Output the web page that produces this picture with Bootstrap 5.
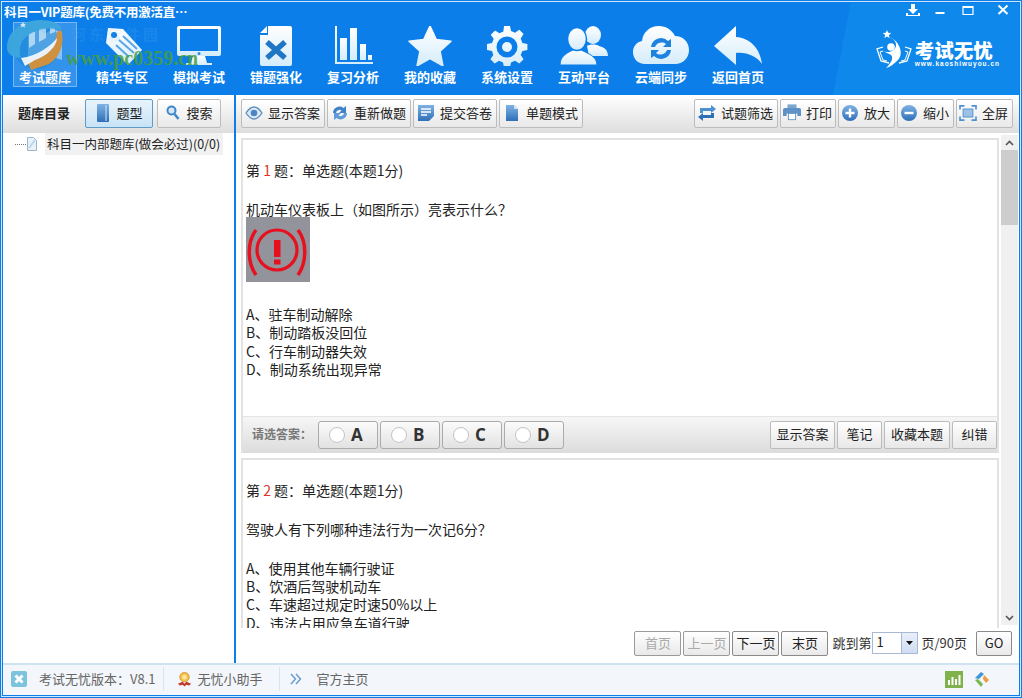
<!DOCTYPE html>
<html lang="zh-CN">
<head>
    <meta charset="UTF-8">
    <meta name="viewport" content="width=device-width, initial-scale=1.0">
    <title>考试无忧</title>
    <link href="https://cdn.jsdelivr.net/npm/bootstrap@5.3.0/dist/css/bootstrap.min.css" rel="stylesheet">
    <style>
        html, body { height: 100%; overflow: hidden; }
        body {
            font-family: "Noto Sans CJK SC", "Liberation Sans", sans-serif;
            font-size: 13px;
            color: #222;
            background: #fff;
        }
        .frame-outer { height: 698px; border: 1px solid #0b7ee9; }
        .frame-mid { height: 100%; border: 1px solid #cfe6fb; }
        .frame-inner { height: 100%; border: 1px solid #0b7ee9; position: relative; }

        /* header */
        .app-header {
            height: 92px;
            background: linear-gradient(101deg, #0b7ee9 82%, #0e88ea 82%);
            color: #fff;
        }
        .title-row { height: 19px; padding-left: 1px; }
        .app-title { font-weight: 700; font-size: 12.5px; letter-spacing: -.25px; line-height: 18px; white-space: nowrap; }
        .win-btns { padding-right: 9px; padding-top: 1px; }
        .win-min { margin-left: 12px; }
        .win-max { margin-left: 14px; }
        .win-close { margin-left: 21px; }
        .tool-strip { gap: 13px; padding-left: 10px; }
        .tool-item {
            width: 64px;
            height: 65px;
            border: 1px solid transparent;
            text-align: center;
            font-weight: 700;
            font-size: 13px;
            line-height: 18px;
            padding-top: 3px;
        }
        .tool-item svg { display: block; margin: 0 auto 2px; }
        .tool-item.is-active { background: rgba(255,255,255,.16); border-color: rgba(255,255,255,.35); }
        .brand-box { margin-left: auto; margin-right: 19px; margin-top: 8px; gap: 3px; }
        .brand-text { padding-top: 10px; }
        .brand-name { font-size: 19.5px; line-height: 20px; font-weight: 900; white-space: nowrap; }
        .brand-url { font-family: "Liberation Sans", sans-serif; font-size: 6.5px; line-height: 8px; font-weight: 700; letter-spacing: 1px; white-space: nowrap; }
        .site-emblem { position: absolute; left: 4px; top: 15px; }
        .site-mark {
            position: absolute;
            left: 63px;
            top: 45px;
            font-family: "Liberation Serif", serif;
            font-weight: 700;
            font-size: 20px;
            line-height: 20px;
            color: rgba(72,158,62,.85);
            white-space: nowrap;
        }
        .site-mark-faint {
            position: absolute;
            left: 68px;
            top: 22px;
            font-weight: 700;
            font-size: 15px;
            line-height: 18px;
            letter-spacing: 3px;
            color: rgba(120,190,245,.14);
            white-space: nowrap;
        }

        /* panels */
        .main-split { height: 568px; }
        .left-pane { width: 231px; flex: none; }
        .split-line { width: 2px; flex: none; background: #0b7ee9; }
        .right-pane { flex: 1 1 0; min-width: 0; }
        .bar-row {
            height: 38px;
            background: linear-gradient(#ffffff, #dedede);
            padding-top: 4px;
        }
        .tool-wrap { padding-left: 5px; padding-right: 6px; }
        .gap-btns { gap: 2px; }
        .left-title { font-weight: 700; margin: 0 15px; line-height: 28px; font-size: 13px; }
        .tool-btn {
            height: 29px;
            padding: 0 4px 2px 3px;
            font-size: 13px;
            line-height: 1;
            color: #222;
            background: linear-gradient(#ffffff, #e9e9e9);
            border: 1px solid #bcbcbc;
            border-radius: 2px;
            gap: 5px;
            white-space: nowrap;
        }
        .tool-btn.btn-tight { padding: 0 4px 2px 2px; }
        .tool-btn.btn-print { padding: 0 3px 2px 2px; }
        .tool-btn.side-btn { width: 64px; padding: 0 0 2px; justify-content: center; gap: 7px; }
        .tool-btn.side-btn.wide-btn { width: 68px; }
        .tool-btn.is-on { background: linear-gradient(#e9f4fc, #c7e3f6); border-color: #5d9cc8; }
        .tree-row { height: 22px; padding-left: 12px; }
        .tree-dots { width: 11px; border-top: 1px dotted #777; }
        .tree-text { background: #f1f1f1; width: 178px; height: 22px; line-height: 22px; padding-left: 2px; margin-left: 7px; font-size: 12.5px; white-space: nowrap; }

        .work-area { height: 495px; }
        .qa-column { flex: 1 1 0; min-width: 0; padding: 5px 2px 0 5px; overflow: hidden; }
        .qa-card { height: 315px; border: 2px solid #e2e2e2; border-bottom: 0; margin-bottom: 5px; }
        .qa-body { padding: 21px 0 0 3px; font-size: 14px; line-height: 18.3px; color: #222; }
        .qa-head { margin-bottom: 20.6px; }
        .qa-ask { margin-bottom: 20.6px; }
        .qa-pic { display: block; margin: -1px 0 23px; }
        .qa-no { color: #e2322b; }
        .qa-bar {
            height: 37px;
            margin-top: auto;
            background: linear-gradient(#f6f6f6, #dcdcdc);
            border-top: 1px solid #e4e4e4;
            padding: 4px 0 0 9px;
        }
        .pick-label { font-weight: 700; font-size: 12px; color: #777; width: 66px; line-height: 25px; }
        .pick-btn {
            width: 60px;
            height: 28px;
            padding: 0 0 0 10px;
            gap: 6px;
            margin-right: 2px;
            font-family: "Open Sans", "Liberation Sans", sans-serif;
            font-weight: 700;
            font-size: 17px;
            color: #333;
            background: linear-gradient(#fbfbfb, #e2e2e2);
            border: 1px solid #ababab;
            border-radius: 3px;
        }
        .pick-dot { width: 16px; height: 16px; border-radius: 50%; background: #fff; border: 1px solid #c4c4c4; flex: none; }
        .mini-btn {
            width: 65px;
            height: 28px;
            padding: 0 0 3px;
            margin-left: 2px;
            font-size: 13px;
            line-height: 1;
            color: #222;
            background: linear-gradient(#ffffff, #e8e8e8);
            border: 1px solid #bcbcbc;
            border-radius: 2px;
        }
        .mini-btn.mini-short { width: 45px; }
        .mini-btn.mini-wide { width: 66px; }

        .scroll-rail { width: 17px; flex: none; margin: 2px 1px 3px 0; background: #f0f0f0; }
        .scroll-cap { height: 15px; }
        .scroll-thumb { height: 75px; background: #cdcdcd; }

        .pager-row { height: 35px; padding: 3px 7px 0 0; }
        .page-btn {
            width: 47px;
            height: 25px;
            padding: 0 0 3px;
            margin-right: 2px;
            font-size: 13px;
            line-height: 1;
            color: #222;
            background: linear-gradient(#ffffff, #e9e9e9);
            border: 1px solid #8a8a8a;
            border-radius: 2px;
        }
        .page-btn:disabled { color: #aaa; opacity: 1; border-color: #9a9a9a; background: linear-gradient(#ffffff, #e9e9e9); }
        .page-btn.go-btn { width: 36px; margin: 0 0 0 9px; }
        .jump-text { line-height: 23px; white-space: nowrap; color: #333; margin-left: 2px; }
        .jump-box { width: 46px; height: 22px; border: 1px solid #a9b8d3; padding-left: 3px; line-height: 18px; margin: 1px 1px 0 1px; background: #fff; }
        .jump-caret { width: 16px; height: 20px; background: linear-gradient(#e9f0fb, #cfdcf2); border-left: 1px solid #a9b8d3; }

        .status-bar { height: 32px; background: #f3f6fa; border-top: 2px solid #cfe2f0; color: #666; font-size: 13px; padding: 0 29px 2px 8px; white-space: nowrap; }
        .status-sep { width: 1px; height: 24px; background: #d8e4ee; }
        .status-ver { margin-left: 12px; }
        .status-sep-a { margin-left: 7px; }
        .status-medal { margin-left: 13px; }
        .status-help { margin-left: 6px; }
        .status-sep-b { margin-left: 16px; }
        .status-chev { margin-left: 10px; }
        .status-home { margin-left: 15px; }
        .status-logo { margin-left: 10px; }
    </style>
</head>
<body>
<svg width="0" height="0" class="position-absolute">
    <defs>
        <linearGradient id="iconFill" x1="0" y1="0" x2="0" y2="1">
            <stop offset="0" stop-color="#ffffff"/>
            <stop offset="1" stop-color="#d5ecfa"/>
        </linearGradient>
        <linearGradient id="btnBlue" x1="0" y1="0" x2="0" y2="1">
            <stop offset="0" stop-color="#7fb2e4"/>
            <stop offset="1" stop-color="#2f6fb8"/>
        </linearGradient>
    </defs>
</svg>
<div class="frame-outer">
<div class="frame-mid">
<div class="frame-inner d-flex flex-column">

    <header class="app-header">
        <div class="title-row d-flex justify-content-between">
            <div class="app-title">科目一VIP题库(免费不用激活直…</div>
            <div class="win-btns d-flex align-items-start">
                <svg width="16" height="15" viewBox="0 0 16 15"><path d="M6 0h4v5h3l-5 5-5-5h3z M1 9h2v2h10V9h2v3H1z" fill="#fff"/></svg>
                <svg class="win-min" width="14" height="15" viewBox="0 0 14 15"><rect x="2.500" y="8" width="9" height="2" fill="#fff"/></svg>
                <svg class="win-max" width="14" height="15" viewBox="0 0 14 15"><path d="M2 2.500h10v8H2z" fill="none" stroke="#fff" stroke-width="1.200"/><rect x="2" y="2" width="10" height="2" fill="#fff"/></svg>
                <svg class="win-close" width="14" height="15" viewBox="0 0 14 15"><path d="M2.500 1.500l9 8.500M11.500 1.500l-9 8.500" stroke="#fff" stroke-width="2"/></svg>
            </div>
        </div>
        <div class="tool-strip d-flex">
            <div class="tool-item is-active">
                <svg width="46" height="40" viewBox="0 0 46 40"><path d="M6 6c7-3 13-2 17 2 4-4 10-5 17-2v28c-7-3-13-2-17 2-4-4-10-5-17-2z" fill="url(#iconFill)" opacity=".5"/></svg>
                考试题库
            </div>
            <div class="tool-item">
                <svg width="46" height="40" viewBox="0 0 46 40"><path d="M9 2l15 1 19 21-14 15L7 17z" fill="url(#iconFill)"/><circle cx="15" cy="9" r="3" fill="#0b7ee9"/><path d="M20 14l15 13M17 19l13 12M24 10l14 13" stroke="#5aa5e6" stroke-width="2"/></svg>
                精华专区
            </div>
            <div class="tool-item">
                <svg width="46" height="40" viewBox="0 0 46 40"><path d="M3 0h40a2 2 0 0 1 2 2v26a2 2 0 0 1-2 2H3a2 2 0 0 1-2-2V2a2 2 0 0 1 2-2z" fill="url(#iconFill)"/><rect x="4" y="3" width="38" height="22" fill="#0b7ee9"/><circle cx="23" cy="27.500" r="1.500" fill="#2f8be0"/><path d="M17 30h12l2 7h5v2H10v-2h5z" fill="url(#iconFill)"/></svg>
                模拟考试
            </div>
            <div class="tool-item">
                <svg width="46" height="40" viewBox="0 0 46 40"><path d="M15 0h22a2 2 0 0 1 2 2v36a2 2 0 0 1-2 2H9a2 2 0 0 1-2-2V9h8z M7 7l7-7v7z" fill="url(#iconFill)"/><path d="M14 16l18 16M32 16L14 32" stroke="#1f76c4" stroke-width="5.500"/></svg>
                错题强化
            </div>
            <div class="tool-item">
                <svg width="46" height="40" viewBox="0 0 46 40"><path d="M5 0h2v36H5zM5 36h38v2H5z" fill="url(#iconFill)"/><rect x="10" y="12" width="7" height="22" fill="url(#iconFill)"/><rect x="20" y="2" width="7" height="32" fill="url(#iconFill)"/><rect x="30" y="18" width="6" height="16" fill="url(#iconFill)"/><rect x="38" y="29" width="4" height="5" fill="url(#iconFill)"/></svg>
                复习分析
            </div>
            <div class="tool-item">
                <svg width="46" height="40" viewBox="0 0 46 40"><path d="M23 0l6.300 13.500 14.700 1.800-10.900 10 2.900 14.600L23 32.700l-13 7.200 2.900-14.600-10.900-10 14.700-1.800z" fill="url(#iconFill)" stroke="url(#iconFill)" stroke-linejoin="round" stroke-width="1.500"/></svg>
                我的收藏
            </div>
            <div class="tool-item">
                <svg width="46" height="40" viewBox="0 0 46 40"><path fill="url(#iconFill)" fill-rule="evenodd" d="M20 0h6l1 5 4 1.700 4.300-2.900 4.300 4.300-2.900 4.300L38.400 17l5 1v6l-5 1-1.700 4 2.900 4.300-4.300 4.300-4.300-2.900-4 1.700-1 5h-6l-1-5-4-1.700-4.300 2.900-4.300-4.300 2.900-4.300L8 25l-5-1v-6l5-1 1.700-4-2.900-4.300 4.300-4.300 4.300 2.900 4-1.700zM23 10.500a10.500 10.500 0 1 0 0 21 10.500 10.500 0 0 0 0-21zM23 16a5 5 0 1 1 0 10 5 5 0 0 1 0-10z"/></svg>
                系统设置
            </div>
            <div class="tool-item">
                <svg width="50" height="40" viewBox="0 0 50 40"><ellipse cx="34" cy="9" rx="8" ry="9" fill="url(#iconFill)"/><path d="M28 20c2-2 10-2 12 0 4 1 9 3 9 10H30z" fill="url(#iconFill)"/><ellipse cx="18" cy="13" rx="9.500" ry="11.500" fill="url(#iconFill)" stroke="#0b7ee9" stroke-width="1.500"/><path d="M1 39c0-9 7-12 13-15 2 1 6 1 8 0 6 3 16 6 16 15z" fill="url(#iconFill)" stroke="#0b7ee9" stroke-width="1"/></svg>
                互动平台
            </div>
            <div class="tool-item">
                <svg width="56" height="40" viewBox="0 0 56 40"><path d="M12 38C5 38 0 33 0 26c0-6 4-10 9-11C10 6 17 0 26 0c7 0 13 4 16 10 8 0 14 6 14 14s-6 14-14 14z" fill="url(#iconFill)"/><path d="M18 21a10 10 0 0 1 17-6l3-2v8h-8l3-3a7 7 0 0 0-11 3zM38 24a10 10 0 0 1-17 6l-3 2v-8h8l-3 3a7 7 0 0 0 11-3z" fill="#1e83df"/></svg>
                云端同步
            </div>
            <div class="tool-item">
                <svg width="48" height="40" viewBox="0 0 48 40"><path d="M22 0L0 20l22 19V27c11-1 20 3 26 11C46 22 36 12 22 11z" fill="url(#iconFill)"/></svg>
                返回首页
            </div>
            <div class="brand-box d-flex align-items-start">
                <svg width="36" height="40" viewBox="0 0 36 40">
                    <path d="M11 0l1.200 2.800 3 .3-2.300 2 .7 3-2.600-1.600L8.400 8l.7-3-2.300-2 3-.3z" fill="#fff"/>
                    <circle cx="15" cy="17" r="3.800" fill="#fff"/>
                    <path d="M14 7C24 12 28 24 22 30c-4 4-8 7-12 8 5-5 8-10 5-13-3-2-6-3-9-4 8 3 14-1 14-6 0-4-3-6-6-8z" fill="#fff"/>
                    <path d="M7 17L1 19l4 12 8 2M29 17l6 2-4 12-8 2" fill="none" stroke="#fff" stroke-width="1.300"/>
                    <path d="M7 21l-3 1 3 8 4 1M29 21l3 1-3 8-4 1" fill="none" stroke="#fff" stroke-width="1"/>
                </svg>
                <div class="brand-text">
                    <div class="brand-name">考试无忧</div>
                    <div class="brand-url">www.kaoshiwuyou.cn</div>
                </div>
            </div>
        </div>
    </header>

    <div class="main-split d-flex">
        <aside class="left-pane">
            <div class="bar-row d-flex">
                <div class="left-title">题库目录</div>
                <button class="btn tool-btn side-btn wide-btn is-on d-flex align-items-center" type="button">
                    <svg width="14" height="18" viewBox="0 0 14 18"><rect x="1" y="0" width="12" height="18" rx="1" fill="url(#btnBlue)"/><path d="M10 1v16" stroke="#cfe3f6"/></svg>
                    题型
                </button>
                <button class="btn tool-btn side-btn ms-1 d-flex align-items-center" type="button">
                    <svg width="14" height="16" viewBox="0 0 14 16"><circle cx="5.500" cy="5.500" r="4" fill="#d5e8f8" stroke="#3f86c9" stroke-width="2"/><path d="M8.500 9l4 5" stroke="#3f86c9" stroke-width="2.500"/></svg>
                    搜索
                </button>
            </div>
            <div class="tree-row d-flex align-items-center">
                <span class="tree-dots"></span>
                <svg width="12" height="14" viewBox="0 0 12 14"><path d="M1.500.5h6l3 3v10h-9z" fill="#e8f2fb" stroke="#9eb4c8"/><path d="M3 11L9 3" stroke="#bcd6ec" stroke-width="2"/></svg>
                <div class="tree-text">科目一内部题库(做会必过)(0/0)</div>
            </div>
        </aside>
        <div class="split-line"></div>
        <main class="right-pane d-flex flex-column">
            <div class="bar-row tool-wrap d-flex justify-content-between">
                <div class="d-flex gap-btns">
                    <button class="btn tool-btn d-flex align-items-center" type="button">
                        <svg width="18" height="14" viewBox="0 0 18 14"><path d="M1 7c3-4.500 5.500-6 8-6s5 1.500 8 6c-3 4.500-5.500 6-8 6s-5-1.500-8-6z" fill="#dfeaf5" stroke="#5a8fc0" stroke-width="1.300"/><circle cx="9" cy="7" r="3.300" fill="#4a87c4"/></svg>
                        显示答案
                    </button>
                    <button class="btn tool-btn d-flex align-items-center" type="button">
                        <svg width="18" height="18" viewBox="0 0 18 18"><path d="M2 9a6.500 6.500 0 0 1 10.500-5L15 2v7H8l2.500-2.500A3.500 3.500 0 0 0 5 9z" fill="#3f82c8"/><path d="M16 9a6.500 6.500 0 0 1-10.500 5L3 16V9h7l-2.500 2.500A3.500 3.500 0 0 0 13 9z" fill="#5f9bd6"/></svg>
                        重新做题
                    </button>
                    <button class="btn tool-btn d-flex align-items-center" type="button">
                        <svg width="18" height="18" viewBox="0 0 18 18"><path d="M1 1h16v11l-5 5H1z" fill="url(#btnBlue)"/><path d="M4 5h10M4 8h10M4 11h6" stroke="#fff" stroke-width="1.300"/></svg>
                        提交答卷
                    </button>
                    <button class="btn tool-btn d-flex align-items-center" type="button">
                        <svg width="18" height="18" viewBox="0 0 18 18"><path d="M3 1h8l4 4v12H3z" fill="url(#btnBlue)"/><path d="M11 1v4h4z" fill="#cfe3f6"/></svg>
                        单题模式
                    </button>
                </div>
                <div class="d-flex gap-btns">
                    <button class="btn tool-btn d-flex align-items-center" type="button">
                        <svg width="18" height="18" viewBox="0 0 18 18"><path d="M2 4h11V1l5 4-5 4V7H5v2H2z" fill="#4c90cf"/><path d="M16 14H5v3l-5-4 5-4v2h8V9h3z" fill="#2f6fb8"/></svg>
                        试题筛选
                    </button>
                    <button class="btn tool-btn btn-print d-flex align-items-center" type="button">
                        <svg width="18" height="17" viewBox="0 0 20 18"><rect x="5" y="0" width="10" height="4" fill="#7ba6d0"/><path d="M2 4h16a2 2 0 0 1 2 2v7h-4v-3H4v3H0V6a2 2 0 0 1 2-2z" fill="#5e92c6"/><rect x="6" y="10" width="8" height="7" fill="#fff" stroke="#5e92c6"/></svg>
                        打印
                    </button>
                    <button class="btn tool-btn btn-tight d-flex align-items-center" type="button">
                        <svg width="18" height="18" viewBox="0 0 18 18"><circle cx="9" cy="9" r="8" fill="url(#btnBlue)"/><path d="M4.500 9h9M9 4.500v9" stroke="#fff" stroke-width="2.400"/></svg>
                        放大
                    </button>
                    <button class="btn tool-btn btn-tight d-flex align-items-center" type="button">
                        <svg width="18" height="18" viewBox="0 0 18 18"><circle cx="9" cy="9" r="8" fill="url(#btnBlue)"/><path d="M4.500 9h9" stroke="#fff" stroke-width="2.400"/></svg>
                        缩小
                    </button>
                    <button class="btn tool-btn btn-tight d-flex align-items-center" type="button">
                        <svg width="18" height="16" viewBox="0 0 20 18"><path d="M1 5V1h5M14 1h5v4M19 13v4h-5M6 17H1v-4" fill="none" stroke="#4c90cf" stroke-width="1.800"/><rect x="4.500" y="4.500" width="11" height="9" fill="#9cc1e4" stroke="#4c90cf"/></svg>
                        全屏
                    </button>
                </div>
            </div>

            <div class="work-area d-flex">
                <div class="qa-column">
                    <section class="qa-card d-flex flex-column">
                        <div class="qa-body">
                            <div class="qa-head">第 <span class="qa-no">1</span> 题：单选题(本题1分)</div>
                            <div>机动车仪表板上（如图所示）亮表示什么？</div>
                            <svg class="qa-pic" width="64" height="65" viewBox="0 0 64 65">
                                <rect width="64" height="65" fill="#93939b"/>
                                <circle cx="31" cy="33" r="20" fill="none" stroke="#e6101f" stroke-width="3.200"/>
                                <path d="M10 13C1 25 1 45 10 58M52 13c9 12 9 32 0 45" fill="none" stroke="#e6101f" stroke-width="3.500"/>
                                <rect x="28" y="23" width="6.500" height="17" fill="#e6101f"/>
                                <rect x="28" y="42.500" width="6.500" height="5" fill="#e6101f"/>
                            </svg>
                            <div>A、驻车制动解除</div>
                            <div>B、制动踏板没回位</div>
                            <div>C、行车制动器失效</div>
                            <div>D、制动系统出现异常</div>
                        </div>
                        <div class="qa-bar d-flex">
                            <div class="pick-label">请选答案：</div>
                            <label class="btn pick-btn d-flex align-items-center"><span class="pick-dot"></span>A</label>
                            <label class="btn pick-btn d-flex align-items-center"><span class="pick-dot"></span>B</label>
                            <label class="btn pick-btn d-flex align-items-center"><span class="pick-dot"></span>C</label>
                            <label class="btn pick-btn d-flex align-items-center"><span class="pick-dot"></span>D</label>
                            <div class="ms-auto d-flex">
                                <button class="btn mini-btn" type="button">显示答案</button>
                                <button class="btn mini-btn mini-short" type="button">笔记</button>
                                <button class="btn mini-btn mini-wide" type="button">收藏本题</button>
                                <button class="btn mini-btn mini-short" type="button">纠错</button>
                            </div>
                        </div>
                    </section>
                    <section class="qa-card d-flex flex-column">
                        <div class="qa-body">
                            <div class="qa-head">第 <span class="qa-no">2</span> 题：单选题(本题1分)</div>
                            <div class="qa-ask">驾驶人有下列哪种违法行为一次记6分？</div>
                            <div>A、使用其他车辆行驶证</div>
                            <div>B、饮酒后驾驶机动车</div>
                            <div>C、车速超过规定时速50%以上</div>
                            <div>D、违法占用应急车道行驶</div>
                        </div>
                    </section>
                </div>
                <div class="scroll-rail d-flex flex-column">
                    <div class="scroll-cap d-flex justify-content-center align-items-center">
                        <svg width="9" height="6" viewBox="0 0 9 6"><path d="M1 5l3.500-3.500L8 5" fill="none" stroke="#555" stroke-width="1.600"/></svg>
                    </div>
                    <div class="scroll-thumb"></div>
                    <div class="scroll-cap mt-auto d-flex justify-content-center align-items-center">
                        <svg width="9" height="6" viewBox="0 0 9 6"><path d="M1 1l3.500 3.500L8 1" fill="none" stroke="#555" stroke-width="1.600"/></svg>
                    </div>
                </div>
            </div>

            <div class="pager-row d-flex justify-content-end">
                <button class="btn page-btn" type="button" disabled>首页</button>
                <button class="btn page-btn" type="button" disabled>上一页</button>
                <button class="btn page-btn" type="button">下一页</button>
                <button class="btn page-btn" type="button">末页</button>
                <span class="jump-text">跳到第</span>
                <div class="jump-box d-flex justify-content-between">1<span class="jump-caret d-flex align-items-center justify-content-center"><svg width="7" height="4" viewBox="0 0 7 4"><path d="M0 0h7L3.500 4z" fill="#111"/></svg></span></div>
                <span class="jump-text">页/90页</span>
                <button class="btn page-btn go-btn" type="button">GO</button>
            </div>
        </main>
    </div>

    <footer class="status-bar d-flex align-items-center">
        <svg width="16" height="16" viewBox="0 0 16 16"><rect width="16" height="16" rx="2" fill="#7cc3dd"/><path d="M4.500 4.500l7 7M11.500 4.500l-7 7" stroke="#fff" stroke-width="3"/></svg>
        <span class="status-ver">考试无忧版本：V8.1</span>
        <span class="status-sep status-sep-a"></span>
        <svg class="status-medal" width="15" height="17" viewBox="0 0 16 17"><circle cx="8" cy="6" r="5" fill="#f2c14e" stroke="#d9962b"/><circle cx="8" cy="6" r="2.500" fill="#fbe39a"/><path d="M1 13l5-2 2 2 2-2 5 2-2 2-3-1-2 2-2-2-3 1z" fill="#c0392b"/></svg>
        <span class="status-help">无忧小助手</span>
        <span class="status-sep status-sep-b"></span>
        <svg class="status-chev" width="12" height="12" viewBox="0 0 12 12"><path d="M1 1l4.500 5L1 11M6 1l4.500 5L6 11" fill="none" stroke="#6a9fce" stroke-width="1.500"/></svg>
        <span class="status-home">官方主页</span>
        <svg class="ms-auto" width="18" height="17" viewBox="0 0 18 17"><rect width="18" height="17" fill="#7fb24a"/><path d="M4 14V9M7.500 14V6M11 14V8M14.500 14V4" stroke="#fff" stroke-width="2"/></svg>
        <svg class="status-logo" width="17" height="17" viewBox="0 0 17 17"><path d="M2 7l6-6 3 2-5 5z" fill="#3f97d6"/><path d="M11 4l5 5-3 3-3-4z" fill="#ef9a3c"/><path d="M2 9l6 7 2-3-5-5z" fill="#79b956"/></svg>
    </footer>

    <svg class="site-emblem" width="60" height="54" viewBox="0 0 60 54">
        <circle cx="29" cy="27" r="24" fill="#1a86d6" opacity=".55"/>
        <path d="M22 30V14h6v12zM32 24V10h7v10zM43 16V9h5v5z" fill="#cfe7f7" opacity=".75"/>
        <path d="M0 30C0 12 16 2 34 2c10 0 18 3 21 8l-3 2C40 8 24 12 16 22c-4 6-4 14-2 18C6 40 0 36 0 30z" fill="#3ea7dc" opacity=".95"/>
        <path d="M54 12c4 12 0 26-12 34l-18 6-4-10c16-2 30-14 30-28z" fill="#cf9140"/>
        <path d="M14 40c16-2 30-12 36-20 0 8-10 18-22 22l-10 6z" fill="#e8f2f8"/>
        <path d="M16 4l1 2 2 .2-1.500 1.400.5 2-2-1-2 1 .5-2L13 6.200l2-.2z" fill="#cfe7f7"/>
    </svg>
    <div class="site-mark-faint">河东软件园</div>
    <div class="site-mark">www.pc0359.cn</div>
</div>
</div>
</div>
<script src="https://cdn.jsdelivr.net/npm/bootstrap@5.3.0/dist/js/bootstrap.bundle.min.js"></script>
</body>
</html>
